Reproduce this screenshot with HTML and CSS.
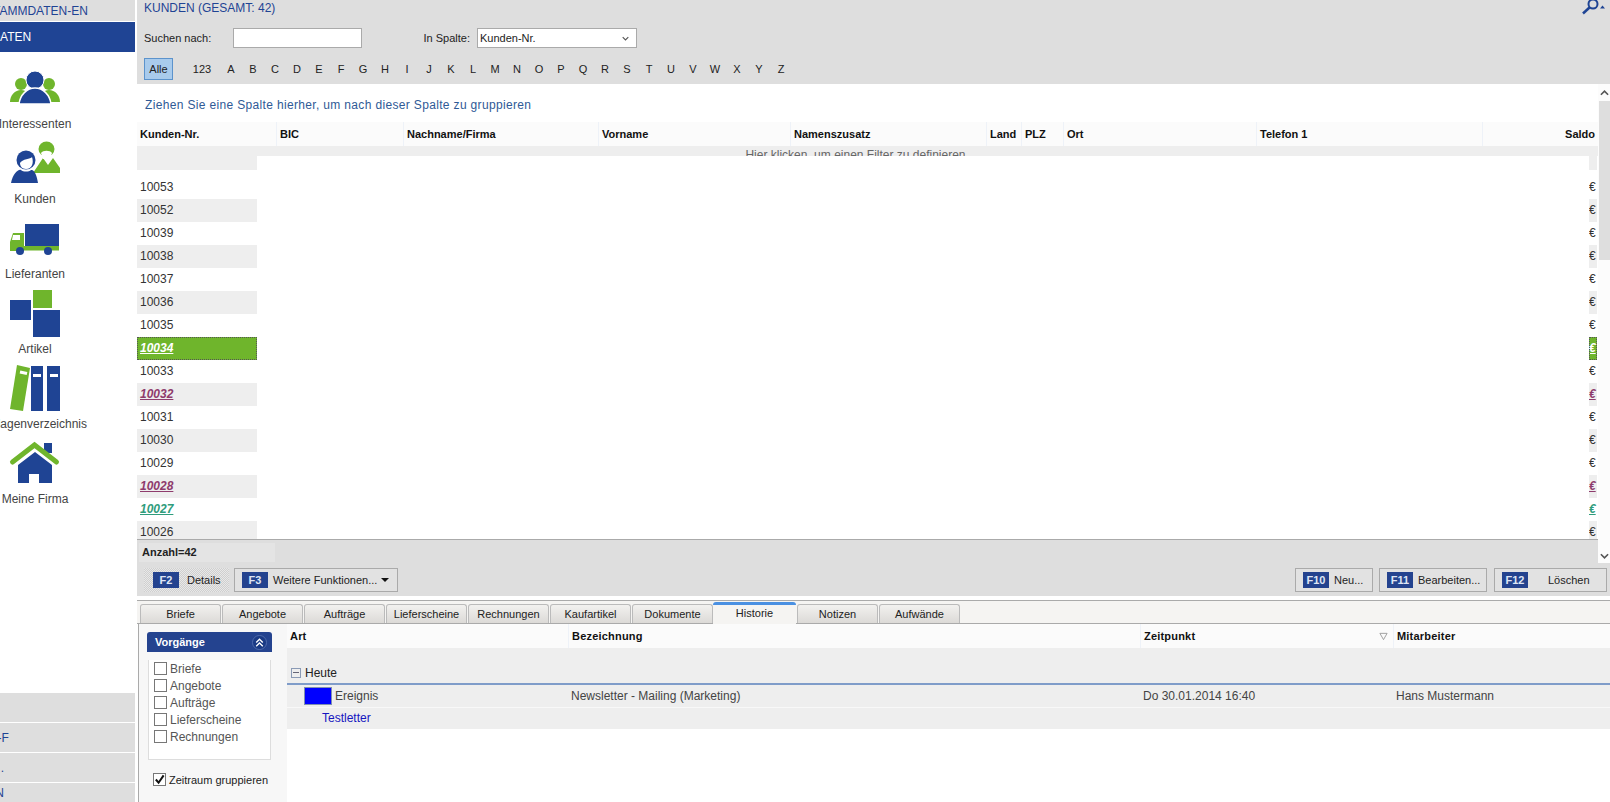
FILE: index.html
```html
<!DOCTYPE html>
<html lang="de">
<head>
<meta charset="utf-8">
<title>Kunden</title>
<link rel="stylesheet" href="styles.css">
</head>
<body>
<aside class="sidebar">
  <div class="side-head"><span class="clip-text">STAMMDATEN-EN</span></div>
  <div class="side-active"><span class="clip-text">STAMMDATEN</span></div>
  <nav class="side-nav">
    <a class="side-item">
      <svg viewBox="0 0 60 60" class="side-icon"><circle cx="16" cy="27" r="6" fill="#6fb52c"/><circle cx="44" cy="27" r="6" fill="#6fb52c"/><path d="M5 45C5 38 10 33 16 33S27 38 27 45Z" fill="#6fb52c"/><path d="M33 45C33 38 38 33 44 33S55 38 55 45Z" fill="#6fb52c"/><circle cx="30" cy="23" r="9" fill="#1f4494" stroke="#fff" stroke-width="1"/><path d="M14 47C15 38 22 31 30 31S45 38 46 47Z" fill="#1f4494" stroke="#fff" stroke-width="1.5"/></svg>
      <span class="side-label">Interessenten</span>
    </a>
    <a class="side-item">
      <svg viewBox="0 0 60 60" class="side-icon"><path d="M28 41L38 26L43 33L48 26L55 36V41Z" fill="#6fb52c"/><ellipse cx="41.500" cy="17" rx="8" ry="7.500" fill="#6fb52c"/><path d="M36 21C38 18 45 18 47 21L45 27H38Z" fill="#fff"/><circle cx="21" cy="28" r="9.500" fill="#1f4494"/><path d="M15 31C17 27 26 27 27 25C29 31 27 37 21 37C17 37 15 34 15 31Z" fill="#fff"/><path d="M6 51C8 42 13 37 16 38C18 40 24 40 26 38C29 37 32 43 33 51Z" fill="#1f4494"/></svg>
      <span class="side-label">Kunden</span>
    </a>
    <a class="side-item">
      <svg viewBox="0 0 60 60" class="side-icon"><rect x="20" y="17" width="34" height="22" fill="#1f4494"/><path d="M5 35L8 26H19V44H5Z" fill="#6fb52c"/><path d="M8 28H15V33H7Z" fill="#fff"/><rect x="19" y="39" width="35" height="4.500" fill="#6fb52c"/><circle cx="15" cy="44" r="4" fill="#1f4494"/><circle cx="43" cy="44" r="4" fill="#1f4494"/></svg>
      <span class="side-label">Lieferanten</span>
    </a>
    <a class="side-item">
      <svg viewBox="0 0 60 60" class="side-icon"><rect x="28" y="8" width="19" height="18" fill="#6fb52c"/><rect x="5" y="18" width="21" height="20" fill="#1f4494"/><rect x="28" y="28" width="27" height="27" fill="#1f4494"/></svg>
      <span class="side-label">Artikel</span>
    </a>
    <a class="side-item">
      <svg viewBox="0 0 60 60" class="side-icon"><path d="M12 8L25 11L18 54L5 52Z" fill="#6fb52c"/><path d="M15 15L22 16.500" stroke="#fff" stroke-width="3"/><rect x="26" y="9" width="12" height="45" fill="#1f4494"/><rect x="42" y="9" width="13" height="45" fill="#1f4494"/><rect x="28" y="17" width="8" height="3" fill="#fff"/><rect x="45" y="17" width="8" height="3" fill="#fff"/></svg>
      <span class="side-label">Anlagenverzeichnis</span>
    </a>
    <a class="side-item">
      <svg viewBox="0 0 60 60" class="side-icon"><rect x="39" y="11" width="8" height="10" fill="#1f4494"/><path d="M30 20L47 33V51H34V42H24V51H13V33Z" fill="#1f4494"/><path d="M7.500 30L29.500 13L51.500 30" fill="none" stroke="#6fb52c" stroke-width="5" stroke-linecap="round"/></svg>
      <span class="side-label">Meine Firma</span>
    </a>
  </nav>
  <div class="side-stack">
    <div class="side-panel"></div>
    <div class="side-panel"><span class="clip-text">EXPORT-F</span></div>
    <div class="side-panel"><span class="clip-text">.</span></div>
    <div class="side-panel"><span class="clip-text">ADMIN</span></div>
  </div>
</aside>

<main class="main">
  <header class="toolbar">
    <div class="title-row">
      <span class="title">KUNDEN (GESAMT: 42)</span>
      <svg class="search-icon" viewBox="0 0 30 16"><circle cx="13" cy="5" r="4.500" fill="none" stroke="#1f4494" stroke-width="2"/><path d="M9.500 8.500L3 14.500" stroke="#1f4494" stroke-width="2.500"/><path d="M20 9.500H25L22.500 6.500Z" fill="#1f4494"/></svg>
    </div>
    <div class="search-row">
      <label class="search-label">Suchen nach:</label>
      <input class="search-input" type="text">
      <label class="column-label">In Spalte:</label>
      <div class="select"><span>Kunden-Nr.</span><svg viewBox="0 0 10 6" class="select-arrow"><path d="M1 1L5 5L9 1" fill="none" stroke="#555" stroke-width="1.600"/></svg></div>
    </div>
    <div class="alpha-row">
      <span class="alpha-all">Alle</span>
      <span class="alpha-num">123</span>
      <span class="alpha">A</span><span class="alpha">B</span><span class="alpha">C</span><span class="alpha">D</span><span class="alpha">E</span><span class="alpha">F</span><span class="alpha">G</span><span class="alpha">H</span><span class="alpha">I</span><span class="alpha">J</span><span class="alpha">K</span><span class="alpha">L</span><span class="alpha">M</span><span class="alpha">N</span><span class="alpha">O</span><span class="alpha">P</span><span class="alpha">Q</span><span class="alpha">R</span><span class="alpha">S</span><span class="alpha">T</span><span class="alpha">U</span><span class="alpha">V</span><span class="alpha">W</span><span class="alpha">X</span><span class="alpha">Y</span><span class="alpha">Z</span>
    </div>
  </header>

  <section class="list-area">
    <div class="list-main">
      <div class="group-panel">Ziehen Sie eine Spalte hierher, um nach dieser Spalte zu gruppieren</div>
      <div class="list-head">
        <span>Kunden-Nr.</span><span>BIC</span><span>Nachname/Firma</span><span>Vorname</span><span>Namenszusatz</span><span>Land</span><span>PLZ</span><span>Ort</span><span>Telefon 1</span><span class="head-right">Saldo</span>
      </div>
      <div class="filter-strip"><span>Hier klicken, um einen Filter zu definieren</span></div>
      <div class="list-body">
        <div class="col-nr">
          <div class="col-filter"></div>
          <div class="row">10053</div>
          <div class="row alt">10052</div>
          <div class="row">10039</div>
          <div class="row alt">10038</div>
          <div class="row">10037</div>
          <div class="row alt">10036</div>
          <div class="row">10035</div>
          <div class="row sel">10034</div>
          <div class="row">10033</div>
          <div class="row alt purple">10032</div>
          <div class="row">10031</div>
          <div class="row alt">10030</div>
          <div class="row">10029</div>
          <div class="row alt purple">10028</div>
          <div class="row teal">10027</div>
          <div class="row alt">10026</div>
        </div>
        <div class="col-blank"></div>
        <div class="col-saldo">
          <div class="col-filter"></div>
          <div class="row">€</div>
          <div class="row alt">€</div>
          <div class="row">€</div>
          <div class="row alt">€</div>
          <div class="row">€</div>
          <div class="row alt">€</div>
          <div class="row">€</div>
          <div class="row sel">€</div>
          <div class="row">€</div>
          <div class="row alt purple">€</div>
          <div class="row">€</div>
          <div class="row alt">€</div>
          <div class="row">€</div>
          <div class="row alt purple">€</div>
          <div class="row teal">€</div>
          <div class="row alt">€</div>
        </div>
      </div>
      <div class="list-foot"><span class="count">Anzahl=42</span></div>
    </div>
    <div class="scrollbar">
      <svg viewBox="0 0 10 6" class="scroll-arrow"><path d="M1 5L5 1L9 5" fill="none" stroke="#555" stroke-width="1.800"/></svg>
      <div class="scroll-thumb"></div>
      <svg viewBox="0 0 10 6" class="scroll-arrow scroll-down"><path d="M1 1L5 5L9 1" fill="none" stroke="#555" stroke-width="1.800"/></svg>
    </div>
  </section>

  <div class="actions">
    <button class="btn btn-details"><b class="key">F2</b><span>Details</span></button>
    <button class="btn btn-more"><b class="key">F3</b><span>Weitere Funktionen...</span><i class="caret"></i></button>
    <button class="btn btn-new"><b class="key">F10</b><span>Neu...</span></button>
    <button class="btn btn-edit"><b class="key">F11</b><span>Bearbeiten...</span></button>
    <button class="btn btn-del"><b class="key">F12</b><span>Löschen</span></button>
  </div>

  <div class="tabs">
    <span class="tab">Briefe</span><span class="tab">Angebote</span><span class="tab">Aufträge</span><span class="tab">Lieferscheine</span><span class="tab">Rechnungen</span><span class="tab">Kaufartikel</span><span class="tab">Dokumente</span><span class="tab tab-active">Historie</span><span class="tab">Notizen</span><span class="tab">Aufwände</span>
  </div>

  <section class="history">
    <div class="filters">
      <div class="panel-head"><span>Vorgänge</span><svg viewBox="0 0 16 16" class="panel-toggle"><circle cx="8" cy="8" r="7.500" fill="#1a3a85" stroke="#5d78b5" stroke-width=".8"/><path d="M4.500 8L8 4.500L11.500 8M4.500 12L8 8.500L11.500 12" fill="none" stroke="#fff" stroke-width="1.400"/></svg></div>
      <div class="check-list">
        <div class="check-row"><i class="box"></i>Briefe</div>
        <div class="check-row"><i class="box"></i>Angebote</div>
        <div class="check-row"><i class="box"></i>Aufträge</div>
        <div class="check-row"><i class="box"></i>Lieferscheine</div>
        <div class="check-row"><i class="box"></i>Rechnungen</div>
      </div>
      <div class="group-check"><i class="box"><svg viewBox="0 0 12 12" class="tick"><path d="M2 6L5 9.500L10.500 1.500" fill="none" stroke="#111" stroke-width="2.200"/></svg></i>Zeitraum gruppieren</div>
    </div>
    <div class="hist-grid">
      <div class="hist-head">
        <span>Art</span><span>Bezeichnung</span><span class="head-sort">Zeitpunkt<svg viewBox="0 0 10 10" class="sort-icon"><path d="M1 1.500H9L5 8.500Z" fill="none" stroke="#999"/></svg></span><span>Mitarbeiter</span>
      </div>
      <div class="hist-group"><i class="minus"></i>Heute</div>
      <div class="hist-row">
        <span class="hist-art"><i class="swatch"></i>Ereignis</span><span>Newsletter - Mailing (Marketing)</span><span>Do 30.01.2014 16:40</span><span>Hans Mustermann</span>
      </div>
      <div class="hist-sub">Testletter</div>
    </div>
  </section>
</main>
</body>
</html>
```
FILE: styles.css
```css
* { box-sizing: border-box; }
html, body { margin: 0; padding: 0; width: 1610px; height: 802px; overflow: hidden; background: #fff; }
body { display: flex; font: 12px "Liberation Sans", Arial, sans-serif; color: #333; }

.sidebar { width: 135px; height: 802px; flex: none; display: flex; flex-direction: column; overflow: hidden; }
.side-head { height: 21px; background: #dedede; display: flex; justify-content: flex-end; align-items: center; overflow: hidden; margin-bottom: 1px; }
.side-active { height: 30px; background: #1f4494; color: #fff; display: flex; align-items: center; overflow: hidden; }
.clip-text { display: block; white-space: nowrap; }
.side-head .clip-text { color: #1f4494; width: 135px; margin-left: -82px; flex: none; text-align: left; position: relative; left: -15px; }
.side-active .clip-text { margin-left: -51px; }
.side-nav { margin: 5px 0 0 -30px; width: 130px; }
.side-item { display: flex; flex-direction: column; align-items: center; height: 75px; }
.side-icon { width: 60px; height: 60px; flex: none; display: block; }
.side-label { height: 15px; line-height: 15px; white-space: nowrap; color: #444; }
.side-stack { margin-top: auto; height: 109px; display: flex; flex-direction: column; gap: 1px; }
.side-panel { height: 29px; background: #dedede; color: #1f4494; display: flex; align-items: center; overflow: hidden; flex: none; }
.side-panel:last-child { height: 20px; }
.side-panel .clip-text { margin-left: -51px; width: 55px; text-align: right; flex: none; }

.main { width: 1473px; margin-left: 2px; height: 802px; display: flex; flex-direction: column; flex: none; }

.toolbar { height: 84px; background: #dedede; flex: none; padding-left: 7px; }
.title-row { height: 16px; display: flex; justify-content: space-between; align-items: center; }
.title { color: #1f4494; }
.search-icon { width: 30px; height: 16px; margin-top: -2px; flex: none; }
.search-row { margin-top: 12px; height: 20px; display: flex; align-items: center; font-size: 11px; color: #222; }
.search-label { width: 89px; }
.search-input { width: 129px; height: 20px; border: 1px solid #aaa; background: #fff; padding: 0; margin: 0; }
.column-label { width: 115px; text-align: right; padding-right: 7px; }
.select { width: 160px; height: 20px; border: 1px solid #aaa; background: #fff; display: flex; align-items: center; justify-content: space-between; padding: 0 7px 0 2px; }
.select-arrow { width: 7px; height: 5px; }
.alpha-row { margin-top: 10px; height: 22px; display: flex; align-items: center; font-size: 11px; color: #222; }
.alpha-all { width: 29px; height: 22px; margin-right: 11px; background: #a9cbec; border: 1px solid #5c93cc; display: flex; align-items: center; justify-content: center; }
.alpha-num { width: 36px; text-align: center; margin-left: 0; }
.alpha { width: 22px; text-align: center; }

.list-area { height: 479px; flex: none; display: flex; }
.list-main { width: 1461px; flex: none; display: flex; flex-direction: column; }
.group-panel { height: 38px; flex: none; padding: 4px 0 0 8px; display: flex; align-items: center; color: #2f5a96; font-size: 12px; letter-spacing: .34px; }
.list-head { height: 24px; flex: none; background: #fbfbfb; display: grid; grid-template-columns: 139px 127px 195px 192px 196px 35px 42px 193px 226px 116px; font-size: 11px; font-weight: bold; color: #111; }
.list-head span { border-left: 1px solid #eef2f8; padding-left: 3px; line-height: 24px; white-space: nowrap; }
.list-head span:first-child { border-left: 0; }
.list-head .head-right { text-align: right; padding-right: 3px; }
.filter-strip { height: 10px; flex: none; background: #eee; overflow: hidden; text-align: center; padding-right: 24px; line-height: 18px; color: #666; }
.filter-strip span { display: block; margin-top: 0; }
.list-body { height: 383px; flex: none; display: flex; overflow: hidden; }
.col-nr { width: 120px; flex: none; }
.col-blank { flex: 1; }
.col-saldo { width: 8px; flex: none; margin-right: 1px; overflow: hidden; }
.col-filter { height: 14px; background: #eee; margin-bottom: 6px; }
.row { height: 23px; line-height: 22px; padding-left: 3px; white-space: nowrap; color: #333; }
.col-saldo .row { padding-left: 0; }
.alt { background: #eee; }
.sel { background: #6fb52c; color: #fff; outline: 1px dotted #555; outline-offset: -1px; font-weight: bold; font-style: italic; text-decoration: underline; }
.purple { color: #8e3b6c; font-weight: bold; font-style: italic; text-decoration: underline; }
.teal { color: #2f9c7c; font-weight: bold; font-style: italic; text-decoration: underline; }
.list-foot { height: 25px; flex: none; border-top: 1px solid #aaa; border-bottom: 1px solid #aaa; background: #dedede; padding: 3px 0 0 2px; }
.count { display: block; width: 136px; height: 19px; background: #e4e4e4; line-height: 19px; padding-left: 3px; font-size: 11px; font-weight: bold; color: #222; }
.scrollbar { width: 12px; flex: none; position: relative; display: flex; flex-direction: column; align-items: center; background: #fcfcfc; padding-left: 1px; }
.scroll-arrow { width: 9px; height: 6px; margin-top: 6px; flex: none; }
.scroll-thumb { width: 11px; height: 159px; background: #dedede; margin-top: 5px; flex: none; }
.scroll-down { margin-top: auto; margin-bottom: 4px; }

.actions { height: 33px; flex: none; background: #dedede; display: flex; align-items: center; padding: 0 3px 0 7px; }
.btn { height: 24px; margin: 0; padding: 0; border: 1px solid #aaa; background: #e2e2e2; display: flex; align-items: center; font: 11px "Liberation Sans", Arial, sans-serif; color: #222; flex: none; }
.key { width: 26px; height: 16px; background: #24438f; color: #dfe6f5; font-size: 11px; line-height: 16px; text-align: center; margin-left: 7px; margin-right: 5px; flex: none; }
.btn-details { width: 85px; border-color: transparent; background: repeating-conic-gradient(#cfcfcf 0 25%, #e8e8e8 0 50%) 0 0 / 2px 2px; }
.btn-details .key { margin-left: 8px; margin-right: 8px; }
.btn-more { width: 164px; margin-left: 5px; }
.caret { width: 0; height: 0; border-left: 4px solid transparent; border-right: 4px solid transparent; border-top: 4px solid #111; margin-left: 4px; }
.btn-new { width: 78px; margin-left: auto; }
.btn-edit { width: 108px; margin-left: 6px; }
.btn-del { width: 113px; margin-left: 7px; }
.btn-del .key { margin-right: 20px; }

.tabs { height: 24px; margin-top: 4px; flex: none; display: flex; align-items: flex-end; padding-left: 3px; gap: 1px; background: #f5f4f2; border-top: 1px solid #aaa; border-bottom: 1px solid #aaa; }
.tab { width: 81px; height: 19px; border: 1px solid #bbb; border-bottom: 0; border-radius: 3px 3px 0 0; background: linear-gradient(#f2f1ef, #dcdad7); text-align: center; line-height: 18px; font-size: 11px; color: #222; }
.tab-active { width: 83px; height: 22px; margin: 0 0 -1px -1px; background: #f5f4f2; border: 0; border-top: 3px solid #4a90e2; line-height: 16px; }

.history { flex: 1; min-height: 0; display: flex; margin-left: 1px; }
.filters { width: 149px; flex: none; border-left: 1px solid #aaa; background: #f7f7f7; padding: 8px 0 0 8px; display: flex; flex-direction: column; }
.panel-head { width: 125px; height: 20px; background: #24438f; border-radius: 3px 3px 0 0; color: #fff; font-size: 11px; font-weight: bold; display: flex; align-items: center; justify-content: space-between; padding: 0 5px 0 8px; }
.panel-toggle { width: 15px; height: 15px; }
.check-list { width: 123px; height: 100px; margin: 8px 0 0 1px; background: #fff; border: 1px solid #ddd; border-top: 0; padding-left: 5px; }
.check-row { height: 17px; display: flex; align-items: center; color: #555; white-space: nowrap; }
.box { width: 13px; height: 13px; border: 1px solid #777; background: #fff; margin-right: 3px; flex: none; display: block; }
.group-check { display: flex; align-items: center; margin: 11px 0 0 6px; height: 17px; font-size: 11px; color: #222; white-space: nowrap; }
.tick { display: block; width: 11px; height: 11px; }

.hist-grid { flex: 1; min-width: 0; }
.hist-head { height: 24px; background: #fbfbfb; display: grid; grid-template-columns: 281px 572px 253px 217px; font-size: 11px; font-weight: bold; letter-spacing: .2px; color: #111; line-height: 24px; }
.hist-head span { padding-left: 3px; border-left: 1px solid #eef2f8; }
.hist-head span:first-child { border-left: 0; }
.head-sort { position: relative; }
.sort-icon { width: 9px; height: 9px; position: absolute; right: 5px; top: 8px; }
.hist-group { height: 37px; background: #eee; border-bottom: 2px solid #7f9cc9; display: flex; align-items: flex-end; padding: 0 0 3px 4px; color: #222; }
.minus { width: 10px; height: 10px; border: 1px solid #8a9ab5; margin: 0 4px 2px 0; position: relative; flex: none; }
.minus::after { content: ""; position: absolute; left: 1px; right: 1px; top: 3px; height: 1px; background: #667; }
.hist-row { height: 23px; background: #eee; display: grid; grid-template-columns: 283px 572px 253px 215px; align-items: center; color: #444; border-bottom: 1px solid #f8f8f8; }
.hist-art { display: flex; align-items: center; padding-left: 17px; }
.hist-row span:not(.hist-art) { padding-left: 1px; }
.swatch { width: 28px; height: 18px; background: #0000ff; border: 1px solid #7f8fb0; margin-right: 3px; flex: none; }
.hist-sub { height: 21px; background: #eee; color: #1515c0; line-height: 21px; padding-left: 35px; }
```
